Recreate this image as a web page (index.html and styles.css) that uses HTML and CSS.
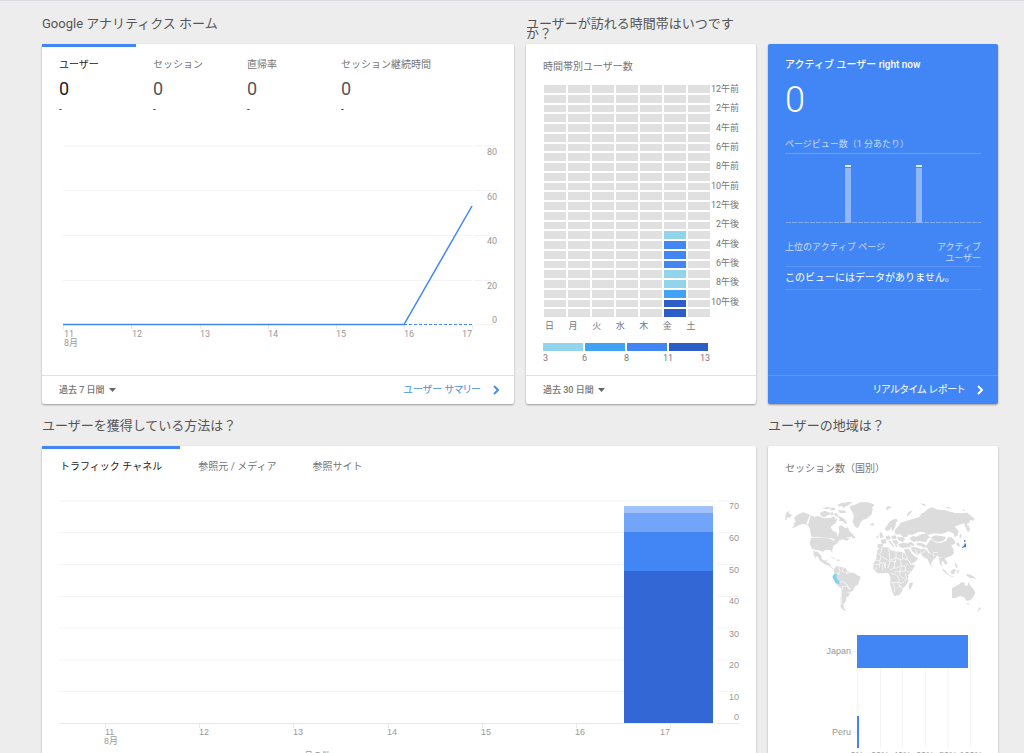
FILE: index.html
```html
<!DOCTYPE html>
<html lang="ja">
<head>
  <meta charset="UTF-8">
  <title>Google アナリティクス ホーム</title>
  <link rel="stylesheet" href="styles.css">
</head>
<body>

  <main class="dashboard">

    <section class="panel span-2">
      <h2>Google アナリティクス ホーム</h2>
      <div class="card">
        <div class="metrics">
          <button class="metric active">
            <span class="metric-name">ユーザー</span>
            <span class="metric-value">0</span>
            <span class="metric-change">-</span>
          </button>
          <button class="metric">
            <span class="metric-name">セッション</span>
            <span class="metric-value">0</span>
            <span class="metric-change">-</span>
          </button>
          <button class="metric">
            <span class="metric-name">直帰率</span>
            <span class="metric-value">0</span>
            <span class="metric-change">-</span>
          </button>
          <button class="metric">
            <span class="metric-name">セッション継続時間</span>
            <span class="metric-value">0</span>
            <span class="metric-change">-</span>
          </button>
        </div>
        <svg class="chart" viewBox="0 0 472 251">
          <path class="grid-line" d="M21 22H430M432 22H456M21 66.5H430M432 66.5H456M21 111.5H430M432 111.5H456M21 156.5H430M432 156.5H456M432 200.5H456"/>
          <path class="tick" d="M21.5 201v4M89.5 201v4M158.5 201v4M226.5 201v4M294.5 201v4M362.5 201v4M430.5 201v4"/>
          <path class="users-dashed" d="M362 200.5H430"/>
          <path class="users-line" d="M21 200.5H362L430 82"/>
          <g class="end">
            <text x="455" y="31">80</text>
            <text x="455" y="76">60</text>
            <text x="455" y="120">40</text>
            <text x="455" y="165">20</text>
            <text x="455" y="199">0</text>
            <text x="430" y="213">17</text>
          </g>
          <text x="22" y="213">11</text>
          <text x="22" y="222">8月</text>
          <text x="90" y="213">12</text>
          <text x="158" y="213">13</text>
          <text x="226" y="213">14</text>
          <text x="294" y="213">15</text>
          <text x="362" y="213">16</text>
        </svg>
        <div class="card-footer">
          <label class="range">
            <select aria-label="期間"><option>過去 7 日間</option></select>
            <svg width="7" height="4" viewBox="0 0 7 4"><path d="M0 0h7L3.5 4z"/></svg>
          </label>
          <a class="report-link" href="#">ユーザー サマリー
            <svg width="6" height="10" viewBox="0 0 6 10"><path d="M1 1l4 4-4 4"/></svg>
          </a>
        </div>
      </div>
    </section>

    <section class="panel">
      <h2>ユーザーが訪れる時間帯はいつですか？</h2>
      <div class="card">
        <h3>時間帯別ユーザー数</h3>
        <div class="heatmap">
          <div class="heat-cells" id="heatCells"></div>
          <div class="heat-hours" id="heatHours"></div>
          <div class="heat-days">
            <span>日</span><span>月</span><span>火</span><span>水</span><span>木</span><span>金</span><span>土</span>
          </div>
        </div>
        <svg class="legend" width="172" height="22" viewBox="0 0 172 22">
          <rect class="level-1" x="0" y="0" width="40" height="8"/>
          <rect class="level-2" x="42" y="0" width="40" height="8"/>
          <rect class="level-3" x="84" y="0" width="40" height="8"/>
          <rect class="level-4" x="126" y="0" width="39" height="8"/>
          <text x="0" y="18">3</text>
          <text x="39" y="18">6</text>
          <text x="81" y="18">8</text>
          <text x="120" y="18">11</text>
          <text x="157" y="18">13</text>
        </svg>
        <div class="card-footer">
          <label class="range">
            <select aria-label="期間"><option>過去 30 日間</option></select>
            <svg width="7" height="4" viewBox="0 0 7 4"><path d="M0 0h7L3.5 4z"/></svg>
          </label>
        </div>
      </div>
    </section>

    <section class="panel no-title">
      <div class="card realtime">
        <h3>アクティブ ユーザー right now</h3>
        <div class="active-count">0</div>
        <div class="pageviews-title">ページビュー数（1 分あたり）</div>
        <svg class="pageviews" viewBox="0 0 196 70">
          <path class="minute-base" d="M1 68.5H196"/>
          <path class="minute-bar" d="M60 14h6v55h-6zM131 14h6v55h-6z"/>
          <path class="minute-cap" d="M60 11h6v2h-6zM131 11h6v2h-6z"/>
        </svg>
        <div class="pages-head">
          <span>上位のアクティブ ページ</span>
          <span class="pages-users">アクティブ<br>ユーザー</span>
        </div>
        <div class="pages-empty">このビューにはデータがありません。</div>
        <div class="card-footer">
          <a class="report-link" href="#">リアルタイム レポート
            <svg width="6" height="10" viewBox="0 0 6 10"><path d="M1 1l4 4-4 4"/></svg>
          </a>
        </div>
      </div>
    </section>

    <section class="panel span-3">
      <h2>ユーザーを獲得している方法は？</h2>
      <div class="card">
        <div class="tabs">
          <button class="tab active">トラフィック チャネル</button>
          <button class="tab">参照元 / メディア</button>
          <button class="tab">参照サイト</button>
        </div>
        <svg class="chart arial" viewBox="0 0 714 310">
          <path class="grid-line" d="M17 15H671M675 15H697M17 46.5H671M675 46.5H697M17 78.5H671M675 78.5H697M17 110.5H671M675 110.5H697M17 142H671M675 142H697M17 174H671M675 174H697M17 205.5H671M675 205.5H697"/>
          <path class="tick" d="M17 237.5H671M675 237.5H697M63.5 238v4M157.5 238v4M251.5 238v4M346.5 238v4M440.5 238v4M534.5 238v4M628.5 238v4"/>
          <rect fill="#a1c2fa" x="582" y="20" width="89" height="7"/>
          <rect fill="#72a4f8" x="582" y="27" width="89" height="19"/>
          <rect fill="#4286f5" x="582" y="46" width="89" height="39"/>
          <rect fill="#3367d6" x="582" y="85" width="89" height="152"/>
          <g class="end">
            <text x="697" y="23">70</text>
            <text x="697" y="55">60</text>
            <text x="697" y="87">50</text>
            <text x="697" y="118">40</text>
            <text x="697" y="151">30</text>
            <text x="697" y="182">20</text>
            <text x="697" y="214">10</text>
            <text x="697" y="234">0</text>
            <text x="628" y="249">17</text>
          </g>
          <text x="63" y="249">11</text>
          <text x="62" y="258">8月</text>
          <text x="157" y="249">12</text>
          <text x="251" y="249">13</text>
          <text x="345" y="249">14</text>
          <text x="439" y="249">15</text>
          <text x="533" y="249">16</text>
          <text x="262" y="273">月の数</text>
        </svg>
      </div>
    </section>

    <section class="panel">
      <h2>ユーザーの地域は？</h2>
      <div class="card">
        <h3>セッション数（国別）</h3>
        <svg class="world" viewBox="75 270 588 342">
          <!-- North America -->
          <path d="M76 318l5-12 8-3-4 7 11 5-8 9-6-3-2 9-4 0zM104 330l-2-6 10-10 18-7 20 7-11 27 8 6-14-5-14 2-11 6-14 6 10-10-4-6 8-4zM76 358l10-3M152 316l12 4 12-2 10 5 14 2 14-2 6-5 8 10 4-2-4 12-16 12 6 12 12 6 2 12 6-14-2-16 8-4 12 8 8-2 4 12 14 12-12 6-14 0 14 4-10 6-12-4-12 4-10 4-2-8-14-4-54-3-4-10-2-14-6-12z"/>
          <path d="M153 383l54 2 14 7 5-4 12 0-4 10-14 10-3 10 0 11-6-8-14-2-8 6-6-2-10-3-16-2-8-16z"/>
          <path d="M160 423l14 3 10 12 2 10 10 4 8-5-5 10 12 4 2 10 8 4-4 2-10-10-14-5-12-8-8-14-6-2 2 10-8-12zM210 440l14 3 4 5-12-5zM230 448l10 1-1 4-8-1z"/>
          <path d="M180 308l14-6 12 4 6 6-10 4-8 6-12-4zM186 294l18-4 10 4-14 4zM208 298l12-6 8 6-12 4zM210 308l8-2 4 8-8 2zM222 310l10 0 2 8 10 4 10 6 8 10-4 4-10-8-12-2 4-6-8-6-8-4zM234 300l22 2 2 6-18 2zM232 284l14-6 14 0-8 8-14 4zM246 284l14-8 18 0-12 10-12 4 2 4-10-2z"/>
          <path d="M268 290l22-8 10-5 20-1 20 6 4 4-8 6 2 8-4 14-14 12-10 3-8 8-4 10-6 8-8-6-6-14 4-16-4-10z"/>
          <path d="M330 342l8-3 6 3-6 5-6-1zM276 376l8 2 2 8-10-2z"/>
          <!-- South America -->
          <path d="M222 476l8-8 10 2 16 4 6 8 10 6 10 0 10 8 10 4-4 12-4 12-10 6-4 10-10 8-4 10-6 4-4 14-6 6 2 14 8 5-10 0-8-10 0-26 2-30-14-10-10-18 2-12z"/>
          <path class="border" d="M236 470l4 14-4 6M250 474l-4 10 6 2M262 482l-4 8 10-2 2-6M222 490l14 4 2-6M236 518l10-4 14 8 6 12 8 2M248 528l-4 22 0 34M248 530l12-2 10 12M262 546l8 2 4 8"/>
          <!-- Africa -->
          <path d="M352 420l14-8 20 0 6 8 12 4 22 2 8 4 8 18 10 16 14 0-10 18-12 14 2 16-8 14-8 8-6 14-8 8-14 2-6-16-6-20 2-20-8-14-12 2-20 0-12-14 0-14 8-14z"/>
          <path d="M448 520l10-4 0 8-8 16-4-6z"/>
          <path class="border" d="M352 428l14 12 24 14M366 412l-4 20M386 414l2 18 2 18 18-6 0-22M408 444l20 6M428 426l0 20 14 2M340 450l20 2 2-12M360 452l-2 22M358 460l14-2 4 16M376 456l0 18M390 454l-6 20M390 452l16 4 2-14M406 454l-4 20-14 6M420 448l4 18-14 8-8 0M424 466l12 4 8-8M424 468l-4 16-18 2M420 484l16-2 0-12M436 482l14 4M420 484l0 14 16 10M392 490l16 4 10 12-2 12-22 0M436 490l4 18 10 0M416 518l10 2 10-10M398 518l6 14 0 14M412 532l10-4 8 12M416 520l4 10M340 464l18 0M348 470l0 10M368 464l0 18"/>
          <!-- Europe and the Middle East -->
          <path d="M374 356l8-10 8-12 12-7 8 0 4 8-6 0-2 14-6 12-6 0 0-10-6 10-8 2zM358 370l6-4 4 10 4 6-12 2 0-6zM350 378l6-2-2 8-6 0zM354 402l14 0 2 4-6 8-8 2-4-6zM362 392l10-6 8 4-2 10-12 2zM378 378l10-2 4 10-8 4-6-4zM394 378l14-2 2 10-14 2zM384 394l6-2 8 10 6 8-4 0-10-10zM396 392l14-2 6 8-8 6-8-6zM404 404l8 0 0 8-4 0zM412 380l18 2 6 6-8 8-14-6zM404 358l10 2 6 8-4 6-10-2zM414 402l20-4 16 4 2 8-22 4-12-4z"/>
          <path d="M432 418l10-2 8 4 4 10 12 10 8 4-6 10-14 8-6-8-10-18zM452 410l16 2 12 4 0 14-6 6-16-10zM444 398l10-2 10 8-4 4-12-4z"/>
          <!-- Russia and Asia -->
          <path d="M416 348l6-10 14-4 12-4 20-6 12-4 2-8 12-6 10-10 12-4 14 6 8 2 16 0 12 4 16 4 20 2 20-2 8 8 14 10-4 6-10-2-2 8-8 4 6 10 2 14-6-2-6-14-4-10-14 4-14 6 12 14-4 14-8 4-4-12-14-6-20 8-24-2-18 4-14-8-16 0-16 8-14 0-2 6-12 2-10-10-8-2-6-12z"/>
          <path d="M448 384l12-6 10 2 14-8 16 0 10 8-6 6-6 10-18-2-12 0-8 2-8-6zM514 380l14-4 14 2 16 2-4 10-14 6-16-2-10-8zM472 398l14 2 12 6-4 8-12-6-12-2z"/>
          <path d="M504 400l8-12 12 8 18 4 16-8 6-10 10 0 12 12-2 8-10 4 6 12 2 12-8 8-12 4-8 4-12-4-10-4-14-2-12-12-4-10-6-4zM588 398l8 0 4 8-4 4-6-6z"/>
          <path d="M482 432l-2-14 12-2 8 4 6 10 14 2 10 8-8 6-8 12 0 12-6-10-6-14-8-2zM536 440l8 4 8 0 8 10 4 6-8 4-8-12-4 8 4 10-8-6zM598 386l2-14 4-2 0 12zM624 344l6 12 0 6-6-8z"/>
          <path d="M546 474l8 6 12 14-2 2-14-12zM566 496l14 2 0 2-14-2zM572 484l10-8 6 4-6 12-8 0zM590 482l8-2-4 12zM620 492l12 2 12 8 4 6-10-4-8 0-10-6zM586 456l4 8 4 8-4 2-6-10zM514 466l4 4-2 4z"/>
          <path class="border" d="M466 416l2 12 12 6M482 432l18-12M520 440l0-12 14 0"/>
          <!-- Australia and New Zealand -->
          <path d="M576 534l12-6 10-6 8-6 8 2 0 8 8 2 4-12 6 12 8 8 6 12-6 12-8 10-12 2-8-10-12-4-14 6-10 0z"/>
          <path d="M620 580l8 0-4 6zM656 592l8 2-8 8-6 4 6-8z"/>
          <!-- Arctic islands -->
          <path d="M378 292l8-4 10 4-10 4-4 6zM440 316l6-10 12-6-6 10-10 10zM480 280l14 2 4 6-10-2zM556 290l12 2 4 4-12-2zM604 298l12 2-4 3z"/>
          <path class="peru" d="M217 500l6-9 8 1-2 7 0 6 8 8 2 8-3 2-9-5-6-10z"/>
          <path class="japan" d="M612 390l4 0 1 5-4 1zM614 399l4 3 0 10-6 0-7 3 2-5 5-2z"/>
        </svg>
        <svg class="chart arial countries" viewBox="0 0 230 140">
          <path class="grid-line" d="M89.5 11V124M112.5 11V124M134.5 11V124M157.5 11V124M180 11V124M202.5 11V124M85 27.5H89M85 108.5H89"/>
          <rect fill="#4286f5" x="89" y="11" width="111" height="33"/>
          <rect fill="#4286f5" x="89" y="92" width="2" height="32"/>
          <g class="end">
            <text x="83" y="30">Japan</text>
            <text x="83" y="111">Peru</text>
          </g>
          <g class="middle">
            <text x="89" y="134">0%</text>
            <text x="112" y="134">20%</text>
            <text x="134" y="134">40%</text>
            <text x="157" y="134">60%</text>
            <text x="180" y="134">80%</text>
            <text x="203" y="134">100%</text>
          </g>
        </svg>
      </div>
    </section>

  </main>

  <script>
    // users per hour on Friday, as legend levels
    const friday = { 15: 1, 16: 3, 17: 3, 18: 3, 19: 1, 20: 1, 21: 2, 22: 4, 23: 4 };

    const cells = document.getElementById("heatCells");
    for (let hour = 0; hour < 24; hour++) {
      for (let day = 0; day < 7; day++) {
        const cell = document.createElement("span");
        if (day === 5 && friday[hour]) {
          cell.className = "level-" + friday[hour];
        }
        cells.appendChild(cell);
      }
    }

    const hours = document.getElementById("heatHours");
    for (let hour = 0; hour < 24; hour += 2) {
      const label = document.createElement("span");
      label.innerText = (hour % 12 || 12) + (hour < 12 ? "午前" : "午後");
      hours.appendChild(label);
    }
  </script>

</body>
</html>
```
FILE: styles.css
```css
* {
  box-sizing: border-box;
}
body {
  margin: 0;
  border-top: 1px solid #dadbe0;
  background-color: #ededed;
  color: #757575;
  font-family: Roboto, "Noto Sans CJK JP", sans-serif;
  font-size: 10px;
  line-height: 14px;
}
h2, h3 {
  margin: 0;
  font-weight: normal;
}
button, select {
  border: none;
  background: none;
  padding: 0;
  color: inherit;
  font: inherit;
  cursor: pointer;
}
.dashboard {
  display: grid;
  grid-template-columns: repeat(4, 1fr);
  column-gap: 12px;
  padding: 1px 26px 0 42px;
}
.panel {
  display: flex;
  flex-direction: column;
  min-width: 0;
}
.span-2 {
  grid-column: span 2;
}
.span-3 {
  grid-column: span 3;
}
.panel h2 {
  height: 42px;
  padding-top: 17px;
  color: #555;
  font-size: 13px;
  line-height: 10px;
}
.no-title {
  padding-top: 42px;
}
.card {
  flex: 1;
  display: flex;
  flex-direction: column;
  background-color: #fff;
  border-radius: 2px;
  box-shadow: 0 1px 2px rgba(0, 0, 0, 0.35);
}
.card h3 {
  padding: 16px 17px 0;
  font-size: 10px;
}
.card-footer {
  display: flex;
  align-items: center;
  height: 29px;
  margin-top: auto;
  padding: 0 15px 0 17px;
  border-top: 1px solid #e0e0e0;
}
.range {
  display: flex;
  align-items: center;
  gap: 4px;
  font-size: 9px;
  font-weight: 500;
  cursor: pointer;
}
.range select {
  appearance: none;
}
.range path {
  fill: #666;
}
.report-link {
  display: flex;
  align-items: center;
  gap: 12px;
  margin-left: auto;
  color: #4a90e2;
  font-feature-settings: "palt";
  text-decoration: none;
}
.report-link path {
  fill: none;
  stroke: currentColor;
  stroke-width: 2;
}

/* metric tabs */
.metrics {
  display: flex;
  height: 80px;
}
.metric {
  width: 94px;
  padding: 11px 0 0 17px;
  border-top: 3px solid transparent;
  display: flex;
  flex-direction: column;
  justify-content: flex-start;
  text-align: left;
  white-space: nowrap;
}
.metric-value {
  margin-top: 6px;
  color: #555;
  font-size: 18px;
  line-height: 22px;
}
.metric-change {
  line-height: 20px;
  color: #333;
}
.metric.active, .tab.active {
  border-color: #4286f5;
  color: #222;
}
.metric.active .metric-value {
  color: #222;
}

/* charts */
.chart {
  display: block;
  width: 100%;
}
svg text {
  fill: #999;
  font-size: 9px;
}
.arial {
  font-family: "Liberation Sans", "Noto Sans CJK JP", sans-serif;
}
.grid-line, .tick {
  stroke: #f3f3f3;
}
.tick {
  stroke: #e8e8e8;
}
.end {
  text-anchor: end;
}
.middle {
  text-anchor: middle;
}
.users-line, .users-dashed {
  fill: none;
  stroke: #4286f5;
  stroke-width: 1.5;
}
.users-dashed {
  stroke-width: 1;
  stroke-dasharray: 3 2;
}

/* heatmap */
.heatmap {
  display: grid;
  grid-template-columns: 166px auto;
  column-gap: 1px;
  padding: 11px 18px 0;
}
.heat-cells {
  display: grid;
  grid-template-columns: repeat(7, 1fr);
  grid-template-rows: repeat(24, 1fr);
  gap: 2px;
  height: 232px;
}
.heat-cells span {
  background-color: #e0e0e0;
}
.heat-cells .level-1 {
  background-color: #92d4ec;
}
.heat-cells .level-2 {
  background-color: #42a2f5;
}
.heat-cells .level-3 {
  background-color: #4286f5;
}
.heat-cells .level-4 {
  background-color: #2d5dc7;
}
.heat-hours {
  display: grid;
  grid-template-rows: repeat(12, 1fr);
  font-size: 9px;
  line-height: 8px;
  text-align: right;
  white-space: nowrap;
}
.heat-days {
  display: grid;
  grid-template-columns: repeat(7, 1fr);
  padding: 3px 0 0 1px;
  font-size: 9px;
  line-height: 12px;
}
.legend {
  margin: 11px 0 0 17px;
}
.legend text {
  fill: #777;
}
.legend .level-1 {
  fill: #92d4ec;
}
.legend .level-2 {
  fill: #42a2f5;
}
.legend .level-3 {
  fill: #4286f5;
}
.legend .level-4 {
  fill: #2d5dc7;
}

/* realtime */
.card.realtime {
  background-color: #4286f5;
  color: #fff;
}
.realtime h3 {
  padding-top: 14px;
  font-weight: 500;
}
.active-count {
  padding: 8px 17px 0;
  font-size: 36px;
  font-weight: 300;
  line-height: 40px;
}
.pageviews-title {
  margin: 17px 17px 0;
  padding-bottom: 2px;
  border-bottom: 1px solid #6da1f7;
  color: #c9dcfc;
  font-size: 9px;
}
.pageviews {
  margin: 0 17px;
}
.minute-base {
  stroke: #7fadf8;
  stroke-dasharray: 5 1;
}
.minute-bar {
  fill: #8fb7f9;
}
.minute-cap {
  fill: #e3edfd;
}
.pages-head {
  display: flex;
  justify-content: space-between;
  margin: 18px 17px 0;
  padding-bottom: 2px;
  border-bottom: 1px solid #5c96f6;
  color: #c9dcfc;
  font-size: 9px;
  line-height: 11px;
}
.pages-users {
  text-align: right;
}
.pages-empty {
  margin: 0 17px;
  padding: 4px 0;
  border-bottom: 1px solid #5c96f6;
}
.realtime .card-footer {
  border-color: #5c96f6;
}
.realtime .report-link {
  color: #fff;
}

/* traffic tabs */
.tabs {
  display: flex;
  height: 40px;
}
.tab {
  padding: 0 18px 1px;
  border-top: 3px solid transparent;
}

/* world map */
.world {
  margin: 24px 17px 0;
  fill: #dcdcdc;
}
.world .border {
  fill: none;
  stroke: #fff;
  stroke-width: 2;
}
.world .peru {
  fill: #7fd0ee;
}
.world .japan {
  fill: #4a74dc;
}
.countries {
  margin-top: 10px;
}
```
